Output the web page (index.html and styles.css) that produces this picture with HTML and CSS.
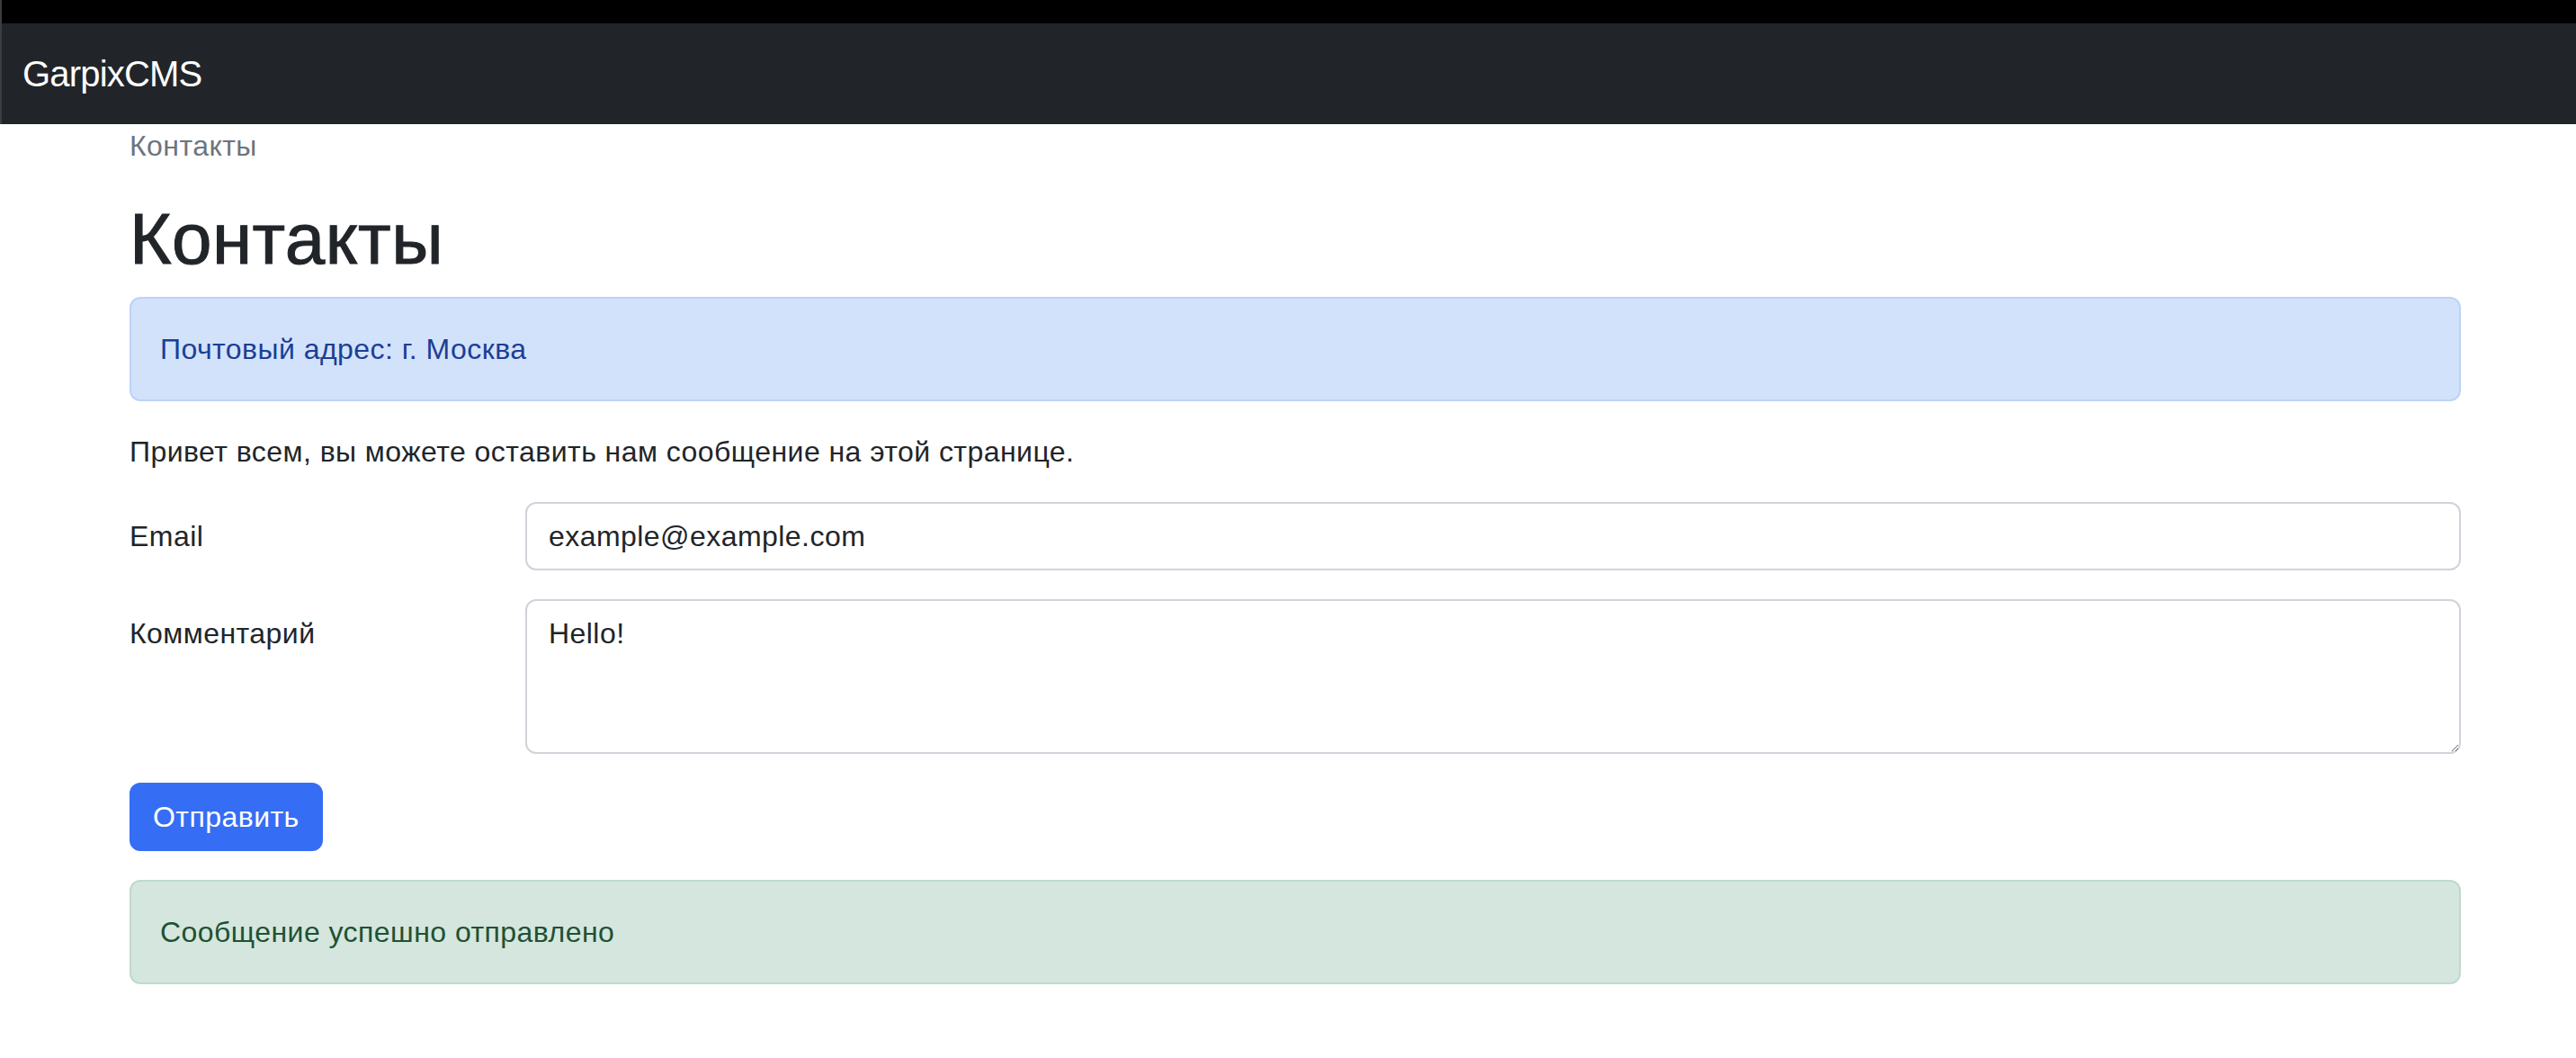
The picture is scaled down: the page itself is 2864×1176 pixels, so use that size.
FILE: index.html
```html
<!DOCTYPE html>
<html lang="ru">
<head>
<meta charset="utf-8">
<title>Контакты</title>
<link rel="stylesheet" href="styles.css">
</head>
<body>
<div class="topbar"></div>
<nav class="navbar">
  <a class="brand" href="#">GarpixCMS</a>
</nav>
<main class="container">
  <nav class="breadcrumb">Контакты</nav>
  <h1 class="title">Контакты</h1>
  <div class="alert alert-info">Почтовый адрес: г. Москва</div>
  <p class="intro">Привет всем, вы можете оставить нам сообщение на этой странице.</p>
  <form class="form">
    <div class="form-row">
      <label class="form-label" for="email">Email</label>
      <input class="form-control" id="email" type="email" value="example@example.com">
    </div>
    <div class="form-row">
      <label class="form-label" for="comment">Комментарий</label>
      <textarea class="form-control form-textarea" id="comment">Hello!</textarea>
    </div>
    <button class="btn" type="button">Отправить</button>
  </form>
  <div class="alert alert-success">Сообщение успешно отправлено</div>
</main>
</body>
</html>
```
FILE: styles.css
```css
* { box-sizing: border-box; }
html, body { margin: 0; padding: 0; background: #fff; }
body {
  font-family: "Liberation Sans", Arial, sans-serif;
  font-size: 32px;
  line-height: 48px;
  letter-spacing: 0.014em;
  color: #212529;
  min-height: 1176px;
}
.topbar { height: 26px; background: #000; border-left: 2px solid #3b3d40; }
.navbar {
  height: 112px;
  background: #212529;
  border-left: 2px solid #3b3d40;
  display: flex;
  align-items: center;
  padding: 0 23px;
}
.brand {
  color: #fff;
  text-decoration: none;
  font-size: 40px;
  line-height: 60px;
  letter-spacing: -0.8px;
}
.container { margin-left: 144px; width: 2592px; }
.breadcrumb { color: #6c757d; margin: 0 0 32px; line-height: 48px; }
.title {
  font-size: 80px;
  line-height: 96px;
  font-weight: 400;
  -webkit-text-stroke: 1px #212529;
  margin: 0 0 16px;
}
.alert {
  border: 2px solid transparent;
  border-radius: 12px;
  padding: 32px;
  margin-bottom: 32px;
}
.alert-info { background: #d3e2fb; border-color: #bcd3f8; color: #1b3f95; }
.alert-success { background: #d4e6de; border-color: #bfdacd; color: #1f5133; margin-top: 32px; }
.intro { margin: 0 0 32px; }
.form-row {
  display: grid;
  grid-template-columns: 440px 1fr;
  margin-bottom: 32px;
}
.form-label { padding-top: 14px; line-height: 48px; }
.form-control {
  display: block;
  width: 100%;
  height: 76px;
  padding: 12px 24px;
  font-family: inherit;
  font-size: 32px;
  line-height: 48px;
  letter-spacing: 0.014em;
  color: #212529;
  background: #fff;
  border: 2px solid #ced4da;
  border-radius: 12px;
  outline: none;
}
.form-textarea { height: 172px; resize: vertical; }
.btn {
  display: inline-block;
  height: 76px;
  padding: 12px 24px;
  font-family: inherit;
  font-size: 32px;
  line-height: 48px;
  letter-spacing: 0.014em;
  color: #fff;
  background: #356ef4;
  border: 2px solid #356ef4;
  border-radius: 12px;
}
```
